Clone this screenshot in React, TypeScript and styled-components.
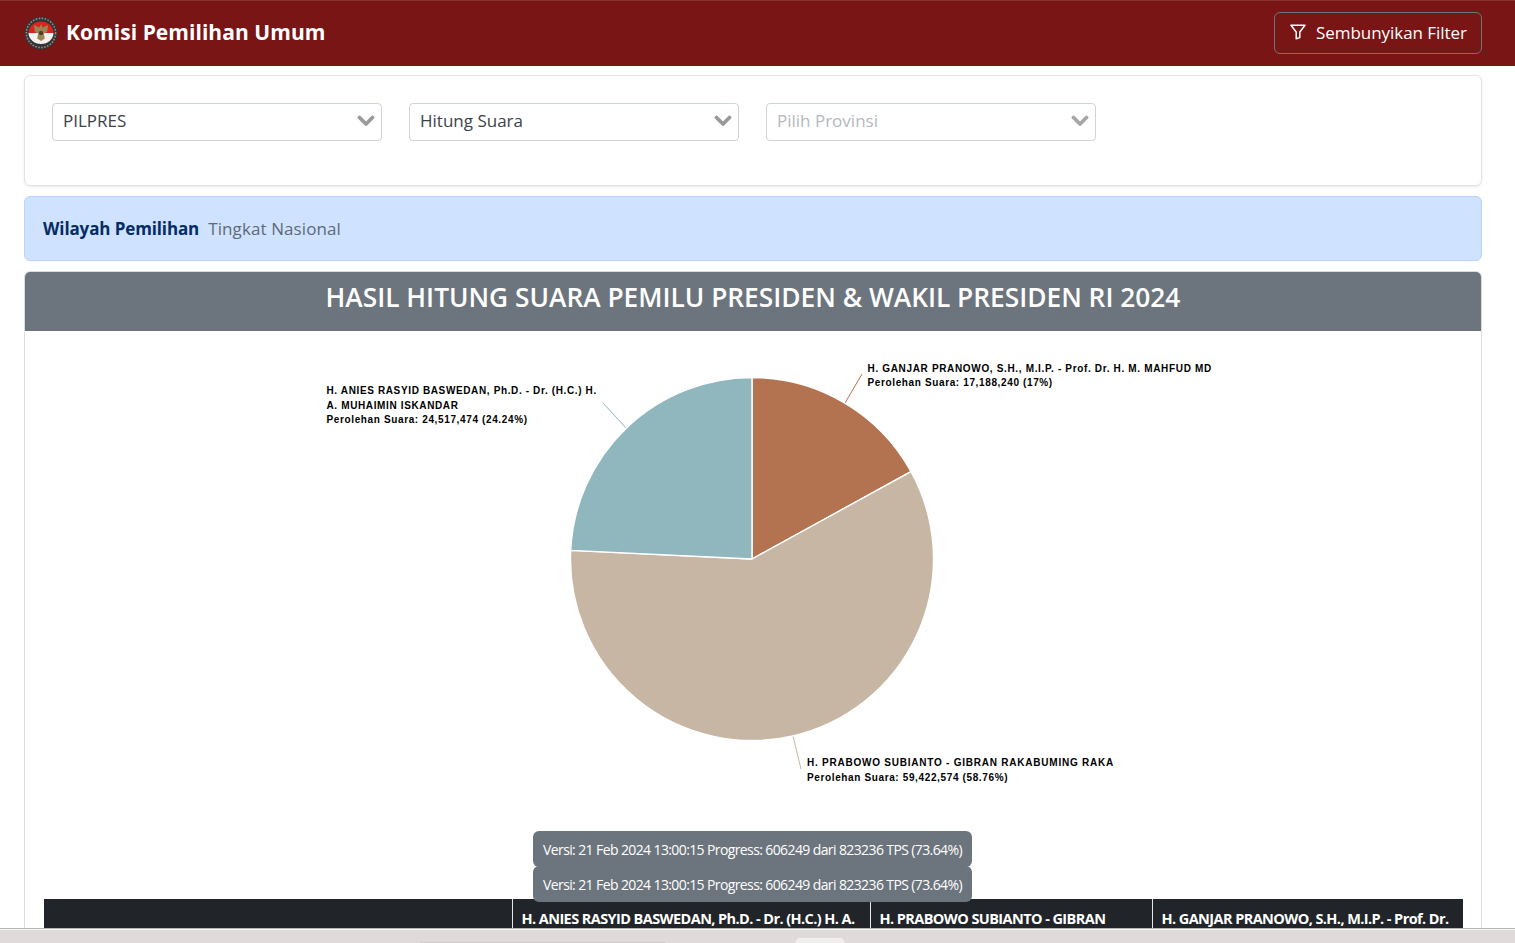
import React from 'react';
import styled, { createGlobalStyle } from 'styled-components';

const GlobalStyle = createGlobalStyle`
  html, body {
    margin: 0;
    padding: 0;
    height: 100%;
    overflow: hidden;
    background: #fff;
    font-family: "Open Sans", "Noto Sans", sans-serif;
    color: #212529;
  }
  * { box-sizing: border-box; }
`;

const Page = styled.div`
  position: relative;
  height: 943px;
  overflow: hidden;
`;

const Navbar = styled.header`
  height: 66px;
  background: #7a1515;
  border-top: 1px solid #8a3030;
  display: flex;
  align-items: center;
  justify-content: space-between;
  padding: 0 33px 1px 24px;
`;

const Brand = styled.div`
  display: flex;
  align-items: center;
  gap: 8px;
  color: #fff;
  font-size: 21px;
  font-weight: 700;
  letter-spacing: 0.05px;
`;

const BrandName = styled.span`
  padding-bottom: 2px;
`;

const FilterButton = styled.button`
  height: 42px;
  width: 208px;
  display: flex;
  align-items: center;
  justify-content: center;
  gap: 9px;
  background: transparent;
  border: 1px solid #6c757d;
  border-radius: 6px;
  color: #fff;
  font-family: inherit;
  font-size: 17px;
  letter-spacing: -0.05px;
  padding: 0 0 2px 0;
`;

const Content = styled.main`
  padding: 9px 33px 0 24px;
  display: flex;
  flex-direction: column;
  gap: 10px;
`;

const FilterCard = styled.section`
  height: 111px;
  background: #fff;
  border: 1px solid #e3e3e3;
  border-radius: 6px;
  box-shadow: 0 1px 3px rgba(0, 0, 0, 0.08);
  padding: 27px;
  display: flex;
  gap: 27px;
`;

const SelectBox = styled.div<{ $muted?: boolean }>`
  width: 330px;
  height: 38px;
  border: 1px solid #ced4da;
  border-radius: 4px;
  background: #fff;
  display: flex;
  align-items: center;
  justify-content: space-between;
  padding: 0 6px 3px 10px;
  font-size: 17px;
  color: ${(props) => (props.$muted ? '#b4b9be' : '#3c4349')};
`;

const Alert = styled.section`
  height: 65px;
  background: #cfe2ff;
  border: 1px solid #b6d4fe;
  border-radius: 6px;
  display: flex;
  align-items: center;
  gap: 9px;
  padding: 0 18px;
  font-size: 17px;
`;

const AlertTitle = styled.strong`
  color: #052c65;
  font-weight: 700;
  letter-spacing: -0.12px;
`;

const AlertText = styled.span`
  color: #5f6a75;
  letter-spacing: 0.1px;
`;

const ResultCard = styled.section`
  border: 1px solid #dcdcdc;
  border-radius: 6px 6px 0 0;
  background: #fff;
`;

const ResultHeader = styled.h1`
  margin: 0;
  height: 59px;
  padding-bottom: 10px;
  background: #6c757d;
  border-radius: 5px 5px 0 0;
  color: #fff;
  font-size: 26.3px;
  font-weight: 600;
  display: flex;
  align-items: center;
  justify-content: center;
`;

const ChartArea = styled.div`
  height: 568px;
  display: flex;
  justify-content: center;
`;

const TableWrap = styled.div`
  padding: 0 18px 0 19px;
`;

const Table = styled.table`
  width: 100%;
  border-collapse: collapse;
  table-layout: fixed;
  background: #212529;
  color: #fff;
`;

const HeadCell = styled.th<{ $w: number }>`
  width: ${(props) => props.$w}px;
  height: 60px;
  padding: 10px 9px 0;
  vertical-align: top;
  text-align: left;
  font-size: 14.5px;
  line-height: 20px;
  font-weight: 700;
  letter-spacing: -0.58px;
  border-left: 1px solid #e6e6e6;
  white-space: nowrap;
  overflow: hidden;
  &:first-child { border-left: none; }
`;

const Tooltip = styled.div<{ $top: number }>`
  position: absolute;
  left: 533px;
  top: ${(props) => props.$top}px;
  width: 439px;
  height: 36px;
  background: #6c757d;
  border-radius: 6px;
  color: #fff;
  font-size: 14px;
  letter-spacing: -0.61px;
  display: flex;
  align-items: center;
  justify-content: center;
  white-space: nowrap;
`;

const BottomStrip = styled.div`
  position: absolute;
  left: 0;
  right: 0;
  bottom: 0;
  height: 15px;
  background: #dfdbda;
  border-top: 1px solid #b5b5b5;
  box-shadow: inset 0 1px 0 #f7f7f7;
`;

const StripTab = styled.div`
  position: absolute;
  left: 796px;
  top: 9px;
  width: 48px;
  height: 6px;
  background: #f2f0ef;
  border-radius: 4px 4px 0 0;
`;

const StripBar = styled.div`
  position: absolute;
  left: 420px;
  top: 13px;
  width: 245px;
  height: 1px;
  background: #d2cecd;
`;

const ChartLabel = styled.text<{ $ls?: number }>`
  font-family: "Liberation Sans", Arial, sans-serif;
  font-size: 10px;
  font-weight: 700;
  letter-spacing: ${(props) => props.$ls || 0.63}px;
  fill: #000;
`;

const Logo = () => (
  <svg width="34" height="34" viewBox="0 0 34 34">
    <circle cx="17" cy="17" r="16.5" fill="#353333" />
    <circle cx="17" cy="17" r="14.6" fill="none" stroke="#8f8c8a" strokeWidth="1.6" strokeDasharray="1.6 1.4" />
    <path d="M4.5 17 a12.5 11.5 0 0 1 25 0 z" fill="#d8231f" />
    <path d="M4.5 17 h25 a12.5 11 0 0 1 -25 0 z" fill="#f4f1ee" />
    <path d="M17 8 l1.6 3.4 5.4-2.4 -0.8 7 -3.4 1.4 1 5 -3.8 2.6 -3.8-2.6 1-5 -3.4-1.4 -0.8-7 5.4 2.4 z" fill="#9c8454" />
    <circle cx="17" cy="17" r="2.2" fill="#4f4029" />
  </svg>
);

const Chevron = ({ color }: { color: string }) => (
  <svg width="18" height="12" viewBox="0 0 18 12">
    <path d="M2.5 2.5 L9 9 L15.5 2.5" fill="none" stroke={color} strokeWidth="3.8" strokeLinecap="round" strokeLinejoin="round" />
  </svg>
);

const FilterIcon = () => (
  <svg width="18" height="18" viewBox="0 0 18 18">
    <path d="M2 2.2 H16 L10.8 9 V14.6 L7.2 15.8 V9 Z" fill="none" stroke="#fff" strokeWidth="1.5" strokeLinejoin="round" />
  </svg>
);

// chart coordinates are relative to the chart area, which starts at page x=25, y=331
const cx = 727;
const cy = 228;
const r = 181.5;
const slices = [
  { color: '#b37250', from: 0, to: 17 },
  { color: '#c7b6a3', from: 17, to: 75.76 },
  { color: '#8fb7bd', from: 75.76, to: 100 },
];

const slicePath = (from: number, to: number) => {
  const a = (from / 100) * Math.PI * 2;
  const b = (to / 100) * Math.PI * 2;
  const large = to - from > 50 ? 1 : 0;
  const x1 = cx + r * Math.sin(a);
  const y1 = cy - r * Math.cos(a);
  const x2 = cx + r * Math.sin(b);
  const y2 = cy - r * Math.cos(b);
  return `M${cx} ${cy} L${x1} ${y1} A${r} ${r} 0 ${large} 1 ${x2} ${y2} Z`;
};

const PieChart = () => (
  <svg width="1456" height="568" viewBox="0 0 1456 568">
    <path d="M820 72 L837 43" stroke="#b37250" fill="none" />
    <path d="M768 405 L776 438" stroke="#c7b6a3" fill="none" />
    <path d="M602 98 L578 72" stroke="#8fb7bd" fill="none" />
    {slices.map((s) => (
      <path key={s.color} d={slicePath(s.from, s.to)} fill={s.color} stroke="#fff" strokeWidth="1.4" />
    ))}
    <ChartLabel x="842.5" y="41" $ls={0.66}>H. GANJAR PRANOWO, S.H., M.I.P. - Prof. Dr. H. M. MAHFUD MD</ChartLabel>
    <ChartLabel x="842.5" y="55">Perolehan Suara: 17,188,240 (17%)</ChartLabel>
    <ChartLabel x="301.5" y="63">H. ANIES RASYID BASWEDAN, Ph.D. - Dr. (H.C.) H.</ChartLabel>
    <ChartLabel x="301.5" y="78">A. MUHAIMIN ISKANDAR</ChartLabel>
    <ChartLabel x="301.5" y="92">Perolehan Suara: 24,517,474 (24.24%)</ChartLabel>
    <ChartLabel x="782" y="435" $ls={0.77}>H. PRABOWO SUBIANTO - GIBRAN RAKABUMING RAKA</ChartLabel>
    <ChartLabel x="782" y="450">Perolehan Suara: 59,422,574 (58.76%)</ChartLabel>
  </svg>
);

const App = () => {
  return (
    <Page>
      <GlobalStyle />
      <Navbar>
        <Brand>
          <Logo />
          <BrandName>Komisi Pemilihan Umum</BrandName>
        </Brand>
        <FilterButton>
          <FilterIcon />
          Sembunyikan Filter
        </FilterButton>
      </Navbar>
      <Content>
        <FilterCard>
          <SelectBox>
            PILPRES
            <Chevron color="#9a9a9a" />
          </SelectBox>
          <SelectBox>
            Hitung Suara
            <Chevron color="#9a9a9a" />
          </SelectBox>
          <SelectBox $muted>
            Pilih Provinsi
            <Chevron color="#a6a6a6" />
          </SelectBox>
        </FilterCard>
        <Alert>
          <AlertTitle>Wilayah Pemilihan</AlertTitle>
          <AlertText>Tingkat Nasional</AlertText>
        </Alert>
        <ResultCard>
          <ResultHeader>HASIL HITUNG SUARA PEMILU PRESIDEN &amp; WAKIL PRESIDEN RI 2024</ResultHeader>
          <ChartArea>
            <PieChart />
          </ChartArea>
          <TableWrap>
            <Table>
              <thead>
                <tr>
                  <HeadCell $w={468} />
                  <HeadCell $w={358}>H. ANIES RASYID BASWEDAN, Ph.D. - Dr. (H.C.) H. A.</HeadCell>
                  <HeadCell $w={282}>H. PRABOWO SUBIANTO - GIBRAN</HeadCell>
                  <HeadCell $w={311}>H. GANJAR PRANOWO, S.H., M.I.P. - Prof. Dr.</HeadCell>
                </tr>
              </thead>
            </Table>
          </TableWrap>
        </ResultCard>
      </Content>
      <Tooltip $top={831}>Versi: 21 Feb 2024 13:00:15 Progress: 606249 dari 823236 TPS (73.64%)</Tooltip>
      <Tooltip $top={866}>Versi: 21 Feb 2024 13:00:15 Progress: 606249 dari 823236 TPS (73.64%)</Tooltip>
      <BottomStrip>
        <StripBar />
        <StripTab />
      </BottomStrip>
    </Page>
  );
};

export default App;
